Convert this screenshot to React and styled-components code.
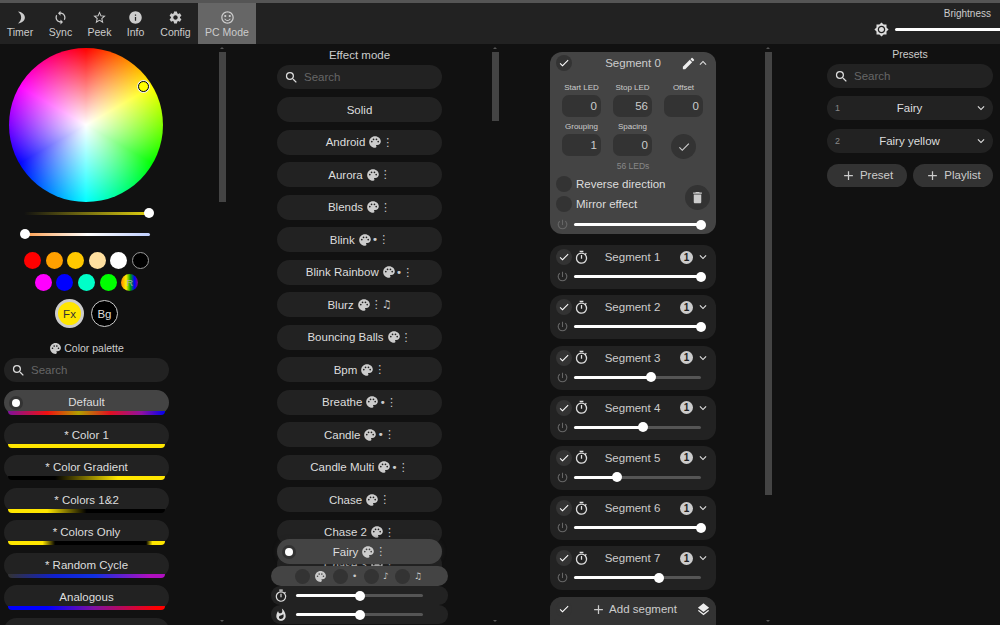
import React from 'react'
import styled, { createGlobalStyle } from 'styled-components'
import {
  MdAdd, MdBrightnessHigh, MdCheck, MdDelete, MdEdit, MdExpandLess, MdExpandMore, MdInfo,
  MdLayers, MdOutlineTimer, MdPalette, MdPowerSettingsNew, MdSearch, MdSentimentSatisfiedAlt,
  MdSettings, MdStarBorder, MdSync, MdWhatshot
} from 'react-icons/md'

const GlobalStyle = createGlobalStyle`
  html, body {
    margin: 0;
    height: 100%;
    overflow: hidden;
    background: #111;
    color: #ddd;
    font-family: "Liberation Sans", Arial, sans-serif;
    font-size: 11.5px;
  }
`

const Page = styled.div`
  width: 1000px;
  height: 625px;
  display: flex;
  flex-direction: column;
  overflow: hidden;
`

const TopBar = styled.div`
  height: 41px;
  flex: none;
  display: flex;
  background: #222;
  border-top: 3px solid #555;
`

const Tab = styled.div`
  display: flex;
  flex-direction: column;
  align-items: center;
  padding-top: 7px;
  gap: 1px;
  font-size: 10.5px;
  white-space: nowrap;
  color: #ccc;
  background: ${p => (p.$active ? '#666' : 'transparent')};
  width: ${p => p.$width}px;
  box-sizing: border-box;

  svg {
    font-size: 15px;
  }
`

const Brightness = styled.div`
  margin-left: auto;
  width: 126px;
  display: flex;
  flex-direction: column;
  align-items: flex-end;
  padding-top: 5px;
  font-size: 10px;
  color: #ccc;
`

const BrightnessLabel = styled.div`
  padding-right: 9px;
`

const BrightnessRow = styled.div`
  width: 100%;
  display: flex;
  align-items: center;
  margin-top: 3px;
  gap: 6px;
  svg {
    font-size: 15px;
    color: #ddd;
  }
`

const BrightnessLine = styled.div`
  flex: 1;
  height: 3px;
  border-radius: 2px 0 0 2px;
  background: #fff;
`

const Columns = styled.div`
  flex: 1;
  min-height: 0;
  display: flex;
`

const Column = styled.div`
  position: relative;
  flex: none;
  box-sizing: border-box;
  width: ${p => p.$width}px;
  padding-left: ${p => p.$left}px;
  overflow: hidden;
`

const Content = styled.div`
  width: ${p => p.$width || 166}px;
`

const Scrollbar = styled.div`
  position: absolute;
  right: 1px;
  top: 8px;
  width: 7px;
  height: ${p => p.$height}px;
  background: #444;
`

const ScrollArrow = styled.div`
  position: absolute;
  right: 3px;
  ${p => (p.$down ? 'bottom: 3px;' : 'top: 3px;')}
  border-left: 2px solid transparent;
  border-right: 2px solid transparent;
  ${p => (p.$down ? 'border-top: 2px solid #555;' : 'border-bottom: 2px solid #555;')}
`

const Heading = styled.div`
  text-align: center;
  color: #ccc;
  height: 14px;
  line-height: 14px;
`

const Wheel = styled.div`
  position: relative;
  width: 154px;
  height: 154px;
  margin: 4px 0 0 5px;
  border-radius: 50%;
  background:
    radial-gradient(circle closest-side, #fff 0%, rgba(255, 255, 255, 0) 100%),
    conic-gradient(#f00, #ff0 60deg, #0f0 120deg, #0ff 180deg, #00f 240deg, #f0f 300deg, #f00);
`

const WheelHandle = styled.div`
  position: absolute;
  left: 129px;
  top: 33px;
  width: 9px;
  height: 9px;
  border-radius: 50%;
  background: #ff0;
  border: 1px solid #000;
  box-shadow: 0 0 0 1px #eee;
`

const Track = styled.div`
  display: flex;
  align-items: center;
  flex: ${p => (p.$width ? 'none' : 1)};
  width: ${p => (p.$width ? `${p.$width}px` : 'auto')};
  height: 3px;
  border-radius: 2px;
  background: ${p => p.$bg || '#555'};
`

const TrackFill = styled.div`
  height: 100%;
  border-radius: 2px;
  background: #fff;
`

const Knob = styled.div`
  flex: none;
  width: 10px;
  height: 10px;
  margin: 0 -5px;
  border-radius: 50%;
  background: #fff;
  position: relative;
`

const Slider = ({ value, bg, plain, width }) => (
  <Track $bg={bg} $width={width}>
    <TrackFill style={{ width: `${value}%`, background: plain ? 'transparent' : undefined }} />
    <Knob />
  </Track>
)

const ColorSlider = styled.div`
  display: flex;
  margin-left: ${p => p.$left}px;
  margin-top: ${p => p.$top}px;
  height: 10px;
  align-items: center;
`

const SwatchRow = styled.div`
  display: flex;
  justify-content: center;
  gap: 4.6px;
  margin-top: ${p => p.$top}px;
`

const Swatch = styled.div`
  box-sizing: border-box;
  width: 17px;
  height: 17px;
  border-radius: 50%;
  display: flex;
  align-items: center;
  justify-content: center;
  font-size: 9px;
  color: #aaa;
  background: ${p => p.$color};
  border: ${p => (p.$outlined ? '1px solid #999' : 'none')};
`

const ChannelRow = styled.div`
  display: flex;
  justify-content: center;
  align-items: center;
  gap: 7px;
  margin-top: 8px;
`

const Channel = styled.div`
  box-sizing: border-box;
  width: ${p => p.$size}px;
  height: ${p => p.$size}px;
  border-radius: 50%;
  display: flex;
  align-items: center;
  justify-content: center;
  font-size: 11.5px;
  background: ${p => p.$color};
  color: ${p => (p.$dark ? '#333' : '#ddd')};
  border: ${p => p.$border};
`

const PaletteHeading = styled(Heading)`
  display: flex;
  align-items: center;
  justify-content: center;
  gap: 2px;
  margin-top: 13px;
  font-size: 10.5px;
  svg {
    font-size: 13px;
  }
`

const SearchBox = styled.div`
  display: flex;
  align-items: center;
  gap: 5px;
  height: 24px;
  margin-top: ${p => p.$top || 0}px;
  padding-left: 7px;
  border-radius: 12px;
  background: #222;
  svg {
    flex: none;
    font-size: 15px;
    color: #ddd;
  }
`

const SearchInput = styled.input`
  min-width: 0;
  flex: 1;
  border: 0;
  padding: 0;
  outline: 0;
  background: transparent;
  color: #ddd;
  font: inherit;
  &::placeholder {
    color: #666;
  }
`

const Search = ({ top }) => (
  <SearchBox $top={top}>
    <MdSearch />
    <SearchInput placeholder='Search' readOnly />
  </SearchBox>
)

const PaletteList = styled.div`
  display: flex;
  flex-direction: column;
  gap: 7.5px;
  margin-top: 8px;
`

const PaletteItem = styled.div`
  position: relative;
  height: 25px;
  flex: none;
  display: flex;
  flex-direction: column;
  border-radius: 12.5px;
  background: ${p => (p.$selected ? '#444' : '#222')};
`

const PaletteName = styled.div`
  flex: 1;
  min-height: 0;
  text-align: center;
  line-height: 25px;
`

const PaletteBar = styled.div`
  height: 4px;
  margin: 0 4px;
  border-radius: 0 0 12px 12px;
  background: ${p => p.$bg};
`

const Radio = styled.div`
  position: absolute;
  left: 8px;
  top: 8.5px;
  width: 8px;
  height: 8px;
  border-radius: 50%;
  background: #fff;
  box-shadow: 0 0 0 3px #333;
`

const EffectList = styled.div`
  display: flex;
  flex-direction: column;
  gap: 7.5px;
  margin-top: 8px;
`

const Pill = styled.div`
  position: relative;
  flex: none;
  height: 25px;
  display: flex;
  align-items: center;
  justify-content: center;
  border-radius: 12.5px;
  background: ${p => (p.$selected ? '#444' : '#222')};
  svg {
    font-size: 14px;
    color: #ccc;
    margin-left: 3px;
  }
`

const EffectFlag = styled.span`
  color: #ccc;
  font-family: "DejaVu Sans", sans-serif;
  font-size: 11px;
`

const BottomStack = styled.div`
  position: absolute;
  left: 44px;
  bottom: 0;
  width: 177px;
  display: flex;
  flex-direction: column;
  padding-bottom: 1px;
`

const SelectedEffect = styled(Pill)`
  width: 165px;
  margin-left: 6px;
  margin-bottom: 2px;
  box-shadow: 0 0 4px #222;
`

const FlagBar = styled.div`
  height: 20px;
  display: flex;
  align-items: center;
  padding-left: 24px;
  border-radius: 10px;
  background: #444;
  color: #ccc;
  position: relative;
`

const FlagItem = styled.div`
  display: flex;
  align-items: center;
  width: ${p => p.$width}px;
  gap: 4px;
  svg {
    font-size: 13px;
  }
  span {
    font-size: 9px;
    font-family: "DejaVu Sans", sans-serif;
  }
`

const FlagCheck = styled.div`
  flex: none;
  width: 15px;
  height: 15px;
  border-radius: 50%;
  background: #333;
`

const FxSlider = styled.div`
  height: 19px;
  display: flex;
  align-items: center;
  gap: 8px;
  padding: 0 25px 0 3px;
  border-radius: 9px;
  background: #222;
  svg {
    flex: none;
    font-size: 14px;
    color: #ddd;
  }
`

const SegmentList = styled.div`
  display: flex;
  flex-direction: column;
  gap: 6.2px;
  padding-top: 8px;
`

const Segment = styled.div`
  box-sizing: border-box;
  flex: none;
  height: ${p => (p.$open ? 182 : 44)}px;
  padding: ${p => (p.$open ? 0 : 1)}px 6px 0 6px;
  margin-bottom: ${p => (p.$open ? 5 : 0)}px;
  border-radius: 12px;
  background: ${p => (p.$open ? '#444' : '#222')};
`

const SegmentHead = styled.div`
  display: flex;
  align-items: center;
  height: 22px;
  color: #ccc;
  svg {
    flex: none;
  }
`

const CheckBox = styled.div`
  flex: none;
  width: 16px;
  height: 16px;
  border-radius: 50%;
  display: flex;
  align-items: center;
  justify-content: center;
  background: #333;
  svg {
    font-size: 12px;
    color: #fff;
  }
`

const SegmentName = styled.div`
  flex: 1;
  text-align: center;
  padding-left: ${p => p.$padLeft || 0}px;
  padding-right: ${p => p.$padRight || 0}px;
`

const TimerIcon = styled(MdOutlineTimer)`
  font-size: 15px;
  margin-left: 2px;
  color: #ddd;
`

const CountBadge = styled.div`
  width: 13px;
  height: 13px;
  border-radius: 50%;
  background: #ccc;
  color: #222;
  font-size: 10px;
  font-weight: 700;
  line-height: 13px;
  text-align: center;
  margin-right: 3px;
`

const Chevron = styled.div`
  display: flex;
  font-size: 14px;
  color: #ddd;
`

const EditIcon = styled(MdEdit)`
  font-size: 15px;
  color: #eee;
`

const SegmentBottom = styled.div`
  display: flex;
  align-items: center;
  height: 17px;
  gap: 5px;
  padding-right: 9px;
  margin-top: ${p => p.$top || 0}px;
  svg {
    flex: none;
    font-size: 13px;
    color: #666;
  }
`

const FieldGrid = styled.div`
  display: grid;
  grid-template-columns: repeat(3, 39px);
  column-gap: 12px;
  margin: 7px 0 0 6px;
  justify-items: center;
`

const Field = styled.div`
  display: flex;
  flex-direction: column;
  align-items: center;
  height: 39px;
  font-size: 8px;
  color: #ccc;
`

const FieldLabel = styled.div`
  height: 14px;
  line-height: 14px;
`

const FieldValue = styled.div`
  box-sizing: border-box;
  width: 39px;
  height: 22px;
  padding-right: 4px;
  border-radius: 7px;
  line-height: 22px;
  text-align: right;
  background: #333;
  font-size: 11.5px;
`

const ApplyButton = styled.div`
  width: 25px;
  height: 25px;
  margin-top: 14px;
  border-radius: 50%;
  display: flex;
  align-items: center;
  justify-content: center;
  background: #333;
  font-size: 14px;
  color: #ccc;
`

const LedCount = styled.div`
  text-align: center;
  font-size: 8.5px;
  color: #888;
  height: 10px;
  line-height: 10px;
  margin-top: 2px;
`

const OptionsRow = styled.div`
  display: flex;
  align-items: center;
  margin-top: 5px;
`

const Options = styled.div`
  flex: 1;
  display: flex;
  flex-direction: column;
  gap: 4px;
`

const Option = styled.div`
  display: flex;
  align-items: center;
  gap: 4px;
  color: #ddd;
`

const OptionBox = styled.div`
  width: 16px;
  height: 16px;
  border-radius: 50%;
  background: #333;
`

const TrashButton = styled(ApplyButton)`
  margin: 7px 0 0 0;
  font-size: 15px;
`

const AddSegment = styled.div`
  background: #333;
  border-radius: 12px 12px 0 0;
  height: 40px;
`

const AddHead = styled.div`
  display: flex;
  align-items: center;
  height: 25px;
  padding: 0 5px 0 6px;
  border-radius: 12.5px;
  background: #333;
  color: #ccc;
`

const AddLabel = styled.div`
  flex: 1;
  display: flex;
  align-items: center;
  justify-content: center;
  gap: 3px;
  svg {
    font-size: 15px;
  }
`

const LayersIcon = styled(MdLayers)`
  font-size: 15px;
  color: #eee;
`

const PresetList = styled.div`
  display: flex;
  flex-direction: column;
  gap: 8.5px;
  margin-top: 8px;
`

const Preset = styled.div`
  display: flex;
  align-items: center;
  height: 24px;
  padding: 0 5px 0 8px;
  border-radius: 12px;
  background: #222;
  color: #ddd;
`

const PresetId = styled.div`
  width: 10px;
  font-size: 9px;
  color: #888;
`

const PresetName = styled.div`
  flex: 1;
  text-align: center;
`

const PresetButtons = styled.div`
  display: flex;
  justify-content: space-between;
  margin-top: 11px;
`

const PresetButton = styled.div`
  width: 80px;
  height: 23px;
  display: flex;
  align-items: center;
  justify-content: center;
  gap: 4px;
  border-radius: 12px;
  background: #333;
  color: #ccc;
  svg {
    font-size: 15px;
  }
`

const MoonIcon = () => (
  <svg width='15' height='15' viewBox='0 0 24 24' fill='currentColor'>
    <path d='M8 2.500C14 3 19 7 19 12s-5 9-11 9.500C11.500 18.500 13 15.500 13 12S11.500 5.500 8 2.500z' />
  </svg>
)

const tabs = [
  { name: 'Timer', icon: <MoonIcon />, width: 40 },
  { name: 'Sync', icon: <MdSync />, width: 41 },
  { name: 'Peek', icon: <MdStarBorder />, width: 37 },
  { name: 'Info', icon: <MdInfo />, width: 35 },
  { name: 'Config', icon: <MdSettings />, width: 45 },
  { name: 'PC Mode', icon: <MdSentimentSatisfiedAlt />, width: 58, active: true }
]

const swatchesTop = ['#f00', '#ffa000', '#ffc800', '#ffe0a0', '#fff']
const swatchesBottom = ['#f0f', '#00f', '#00ffc8', '#0f0']

const yellow = '#ffe600'
const palettes = [
  { name: 'Default', selected: true, bg: 'linear-gradient(90deg, #80109a, #f01010 25%, #b0a000 45%, #e01020 65%, #9010a0 85%, #0000f0)' },
  { name: '* Color 1', bg: yellow },
  { name: '* Color Gradient', bg: `linear-gradient(90deg, #000 30%, ${yellow} 70%)` },
  { name: '* Colors 1&2', bg: `linear-gradient(90deg, ${yellow} 25%, #000 50%)` },
  { name: '* Colors Only', bg: `linear-gradient(90deg, ${yellow} 22%, #000 30%, #000 88%, ${yellow} 92%)` },
  { name: '* Random Cycle', bg: 'linear-gradient(90deg, #333, #1020d0 30%, #1030e0 55%, #b010c0 90%)' },
  { name: 'Analogous', bg: 'linear-gradient(90deg, #0000ff, #0000ff 25%, #8010a0 55%, #ff0000 95%)' },
  { name: '', bg: '#222' }
]

const effects = [
  ['Solid'], ['Android', '⋮'], ['Aurora', '⋮'], ['Blends', '⋮'], ['Blink', '•⋮'],
  ['Blink Rainbow', '•⋮'], ['Blurz', '⋮♫'], ['Bouncing Balls', '⋮'], ['Bpm', '⋮'],
  ['Breathe', '•⋮'], ['Candle', '•⋮'], ['Candle Multi', '•⋮'], ['Chase', '⋮'], ['Chase 2', '⋮'],
  ['Chase 3', '⋮']
]

const segments = [
  { id: 1, value: 100 }, { id: 2, value: 100 }, { id: 3, value: 61 }, { id: 4, value: 54 },
  { id: 5, value: 34 }, { id: 6, value: 100 }, { id: 7, value: 67 }
]

const App = () => (
  <Page>
    <GlobalStyle />
    <TopBar>
      {tabs.map(tab => (
        <Tab key={tab.name} $active={tab.active} $width={tab.width}>
          {tab.icon}
          {tab.name}
        </Tab>
      ))}
      <Brightness>
        <BrightnessLabel>Brightness</BrightnessLabel>
        <BrightnessRow>
          <MdBrightnessHigh />
          <BrightnessLine />
        </BrightnessRow>
      </Brightness>
    </TopBar>
    <Columns>
      <Column $width={227} $left={4}>
        <Content $width={165}>
          <Wheel><WheelHandle /></Wheel>
          <ColorSlider $left={20} $top={6}>
            <Slider plain value={100} width={125} bg='linear-gradient(90deg, #111, #e0d010)' />
          </ColorSlider>
          <ColorSlider $left={21} $top={11}>
            <Slider plain value={0} width={125} bg='linear-gradient(90deg, #ffa050, #fff 50%, #c0d0ff)' />
          </ColorSlider>
          <SwatchRow $top={13}>
            {swatchesTop.map(c => <Swatch key={c} $color={c} />)}
            <Swatch $color='#000' $outlined />
          </SwatchRow>
          <SwatchRow $top={5}>
            {swatchesBottom.map(c => <Swatch key={c} $color={c} />)}
            <Swatch $color='linear-gradient(90deg, #f80, #fe0 30%, #0a0 55%, #00f 80%, #808)'>R</Swatch>
          </SwatchRow>
          <ChannelRow>
            <Channel $size={29} $color={yellow} $dark $border='3px solid #ccc'>Fx</Channel>
            <Channel $size={27} $color='#000' $border='1px solid #ccc'>Bg</Channel>
          </ChannelRow>
          <PaletteHeading><MdPalette />Color palette</PaletteHeading>
          <Search top={3} />
          <PaletteList>
            {palettes.map((p, i) => (
              <PaletteItem key={i} $selected={p.selected}>
                {p.selected && <Radio />}
                <PaletteName>{p.name}</PaletteName>
                <PaletteBar $bg={p.bg} />
              </PaletteItem>
            ))}
          </PaletteList>
        </Content>
        <ScrollArrow />
        <Scrollbar $height={150} />
        <ScrollArrow $down />
      </Column>

      <Column $width={273} $left={50}>
        <Content $width={165}>
          <Heading style={{ marginTop: 4 }}>Effect mode</Heading>
          <Search top={3} />
          <EffectList>
            {effects.map(([name, flags]) => (
              <Pill key={name}>
                {name}
                {flags && <MdPalette />}
                {flags && <EffectFlag>{flags}</EffectFlag>}
              </Pill>
            ))}
          </EffectList>
        </Content>
        <BottomStack>
          <SelectedEffect $selected>
            <Radio />
            Fairy<MdPalette /><EffectFlag>⋮</EffectFlag>
          </SelectedEffect>
          <FlagBar>
            <FlagItem $width={38}><FlagCheck /><MdPalette /></FlagItem>
            <FlagItem $width={31}><FlagCheck /><span>•</span></FlagItem>
            <FlagItem $width={31}><FlagCheck /><span>♪</span></FlagItem>
            <FlagItem $width={40}><FlagCheck /><span>♫</span></FlagItem>
          </FlagBar>
          <FxSlider><MdOutlineTimer /><Slider value={50} /></FxSlider>
          <FxSlider><MdWhatshot /><Slider value={50} /></FxSlider>
        </BottomStack>
        <ScrollArrow />
        <Scrollbar $height={69} />
        <ScrollArrow $down />
      </Column>

      <Column $width={273} $left={50}>
        <Content>
          <SegmentList>
            <Segment $open>
              <SegmentHead>
                <CheckBox><MdCheck /></CheckBox>
                <SegmentName $padLeft={13}>Segment 0</SegmentName>
                <EditIcon />
                <Chevron><MdExpandLess /></Chevron>
              </SegmentHead>
              <FieldGrid>
                <Field><FieldLabel>Start LED</FieldLabel><FieldValue>0</FieldValue></Field>
                <Field><FieldLabel>Stop LED</FieldLabel><FieldValue>56</FieldValue></Field>
                <Field><FieldLabel>Offset</FieldLabel><FieldValue>0</FieldValue></Field>
                <Field><FieldLabel>Grouping</FieldLabel><FieldValue>1</FieldValue></Field>
                <Field><FieldLabel>Spacing</FieldLabel><FieldValue>0</FieldValue></Field>
                <ApplyButton><MdCheck /></ApplyButton>
              </FieldGrid>
              <LedCount>56 LEDs</LedCount>
              <OptionsRow>
                <Options>
                  <Option><OptionBox />Reverse direction</Option>
                  <Option><OptionBox />Mirror effect</Option>
                </Options>
                <TrashButton><MdDelete /></TrashButton>
              </OptionsRow>
              <SegmentBottom $top={4}>
                <MdPowerSettingsNew /><Slider value={100} />
              </SegmentBottom>
            </Segment>
            {segments.map(s => (
              <Segment key={s.id}>
                <SegmentHead>
                  <CheckBox><MdCheck /></CheckBox>
                  <TimerIcon />
                  <SegmentName $padRight={4}>Segment {s.id}</SegmentName>
                  <CountBadge>1</CountBadge>
                  <Chevron><MdExpandMore /></Chevron>
                </SegmentHead>
                <SegmentBottom>
                  <MdPowerSettingsNew /><Slider value={s.value} />
                </SegmentBottom>
              </Segment>
            ))}
            <AddSegment>
              <AddHead>
                <CheckBox><MdCheck /></CheckBox>
                <AddLabel><MdAdd />Add segment</AddLabel>
                <LayersIcon />
              </AddHead>
            </AddSegment>
          </SegmentList>
        </Content>
        <ScrollArrow />
        <Scrollbar $height={443} />
        <ScrollArrow $down />
      </Column>

      <Column $width={227} $left={54}>
        <Content>
          <Heading style={{ marginTop: 3, fontSize: 10.5 }}>Presets</Heading>
          <Search top={3} />
          <PresetList>
            <Preset><PresetId>1</PresetId><PresetName>Fairy</PresetName><Chevron><MdExpandMore /></Chevron></Preset>
            <Preset><PresetId>2</PresetId><PresetName>Fairy yellow</PresetName><Chevron><MdExpandMore /></Chevron></Preset>
          </PresetList>
          <PresetButtons>
            <PresetButton><MdAdd />Preset</PresetButton>
            <PresetButton><MdAdd />Playlist</PresetButton>
          </PresetButtons>
        </Content>
      </Column>
    </Columns>
  </Page>
)

export default App
